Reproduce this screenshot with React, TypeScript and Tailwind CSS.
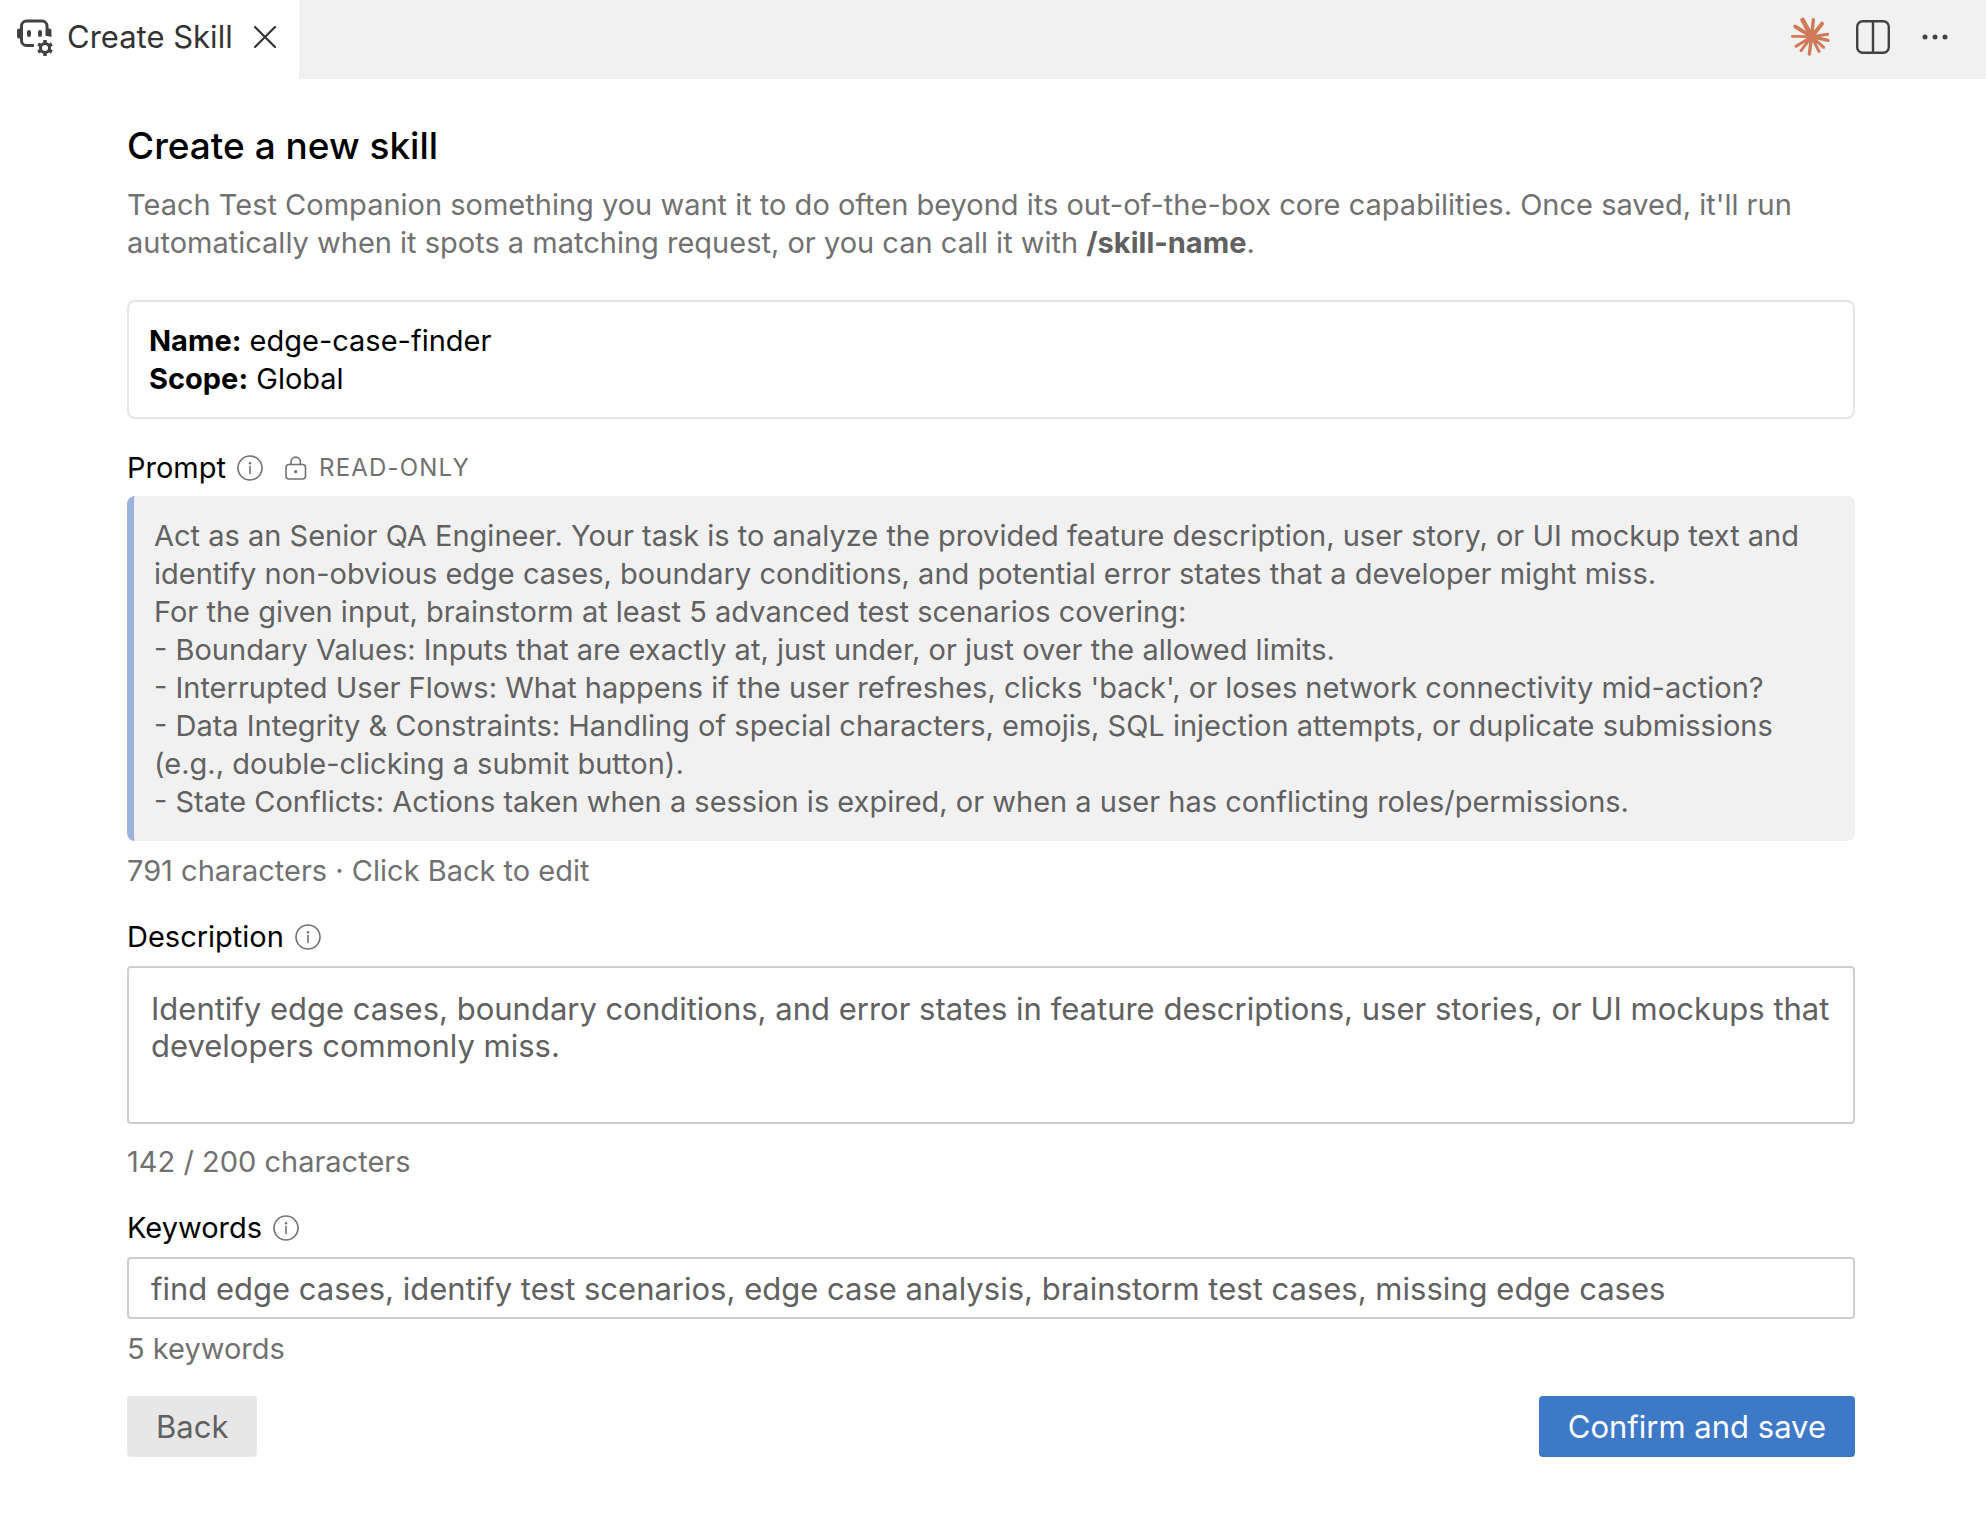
import { useState } from "react";
import type { ReactNode } from "react";

const PROMPT = `Act as an Senior QA Engineer. Your task is to analyze the provided feature description, user story, or UI mockup text and identify non-obvious edge cases, boundary conditions, and potential error states that a developer might miss.
For the given input, brainstorm at least 5 advanced test scenarios covering:
- Boundary Values: Inputs that are exactly at, just under, or just over the allowed limits.
- Interrupted User Flows: What happens if the user refreshes, clicks 'back', or loses network connectivity mid-action?
- Data Integrity & Constraints: Handling of special characters, emojis, SQL injection attempts, or duplicate submissions (e.g., double-clicking a submit button).
- State Conflicts: Actions taken when a session is expired, or when a user has conflicting roles/permissions.`;

function AgentIcon() {
  return (
    <svg width="38" height="38" viewBox="0 0 38 38" fill="none" className="shrink-0">
      <path
        d="M18 27.500H10.500a5 5 0 0 1-5-5V8a5 5 0 0 1 5-5h15.500a5 5 0 0 1 5 5v10"
        stroke="#424242"
        strokeWidth="3"
      />
      <path d="M5.500 10.500H3a2 2 0 0 0-2 2v6a2 2 0 0 0 2 2h2.500zM31 10.500h2.500a2 2 0 0 1 2 2v6.500l-4.500-1z" fill="#424242" />
      <path d="M13 14v3M24 14v3" stroke="#424242" strokeWidth="4" strokeLinecap="round" />
      <circle cx="29" cy="30" r="4.500" stroke="#424242" strokeWidth="3" />
      <path
        d="M29 22v3.500M29 34.500V38M22.100 26l3 1.750M32.900 32.250l3 1.750M22.100 34l3-1.750M32.900 27.750l3-1.750"
        stroke="#424242"
        strokeWidth="3.500"
      />
    </svg>
  );
}

function BurstIcon() {
  return (
    <svg width="40" height="40" viewBox="30 28 120 120" fill="none" stroke="#cf7a58" strokeLinecap="round">
      <path d="M95 87L68 37" strokeWidth="14" />
      <path d="M95 87L126 48M95 87L46 57" strokeWidth="12" />
      <path d="M95 87L100 36M95 87L144 98M95 87L88 139" strokeWidth="10" />
      <path d="M95 87L143 80M95 87L131 119M95 87L117 131M95 87L48 116M95 87L63 129" strokeWidth="9" />
      <path d="M95 87L37 86" strokeWidth="8" />
      <circle cx="95" cy="87" r="13" fill="#cf7a58" />
    </svg>
  );
}

function InfoIcon() {
  return (
    <svg width="26" height="26" viewBox="0 0 26 26" fill="none" className="shrink-0">
      <circle cx="13" cy="13" r="12" stroke="#717171" strokeWidth="1.600" />
      <path d="M13 11.500v7" stroke="#717171" strokeWidth="1.600" strokeLinecap="round" />
      <circle cx="13" cy="8.300" r="1.200" fill="#717171" />
    </svg>
  );
}

function LockIcon() {
  return (
    <svg width="22" height="24" viewBox="0 0 22 24" fill="none" className="shrink-0">
      <rect x="1" y="8.500" width="19.500" height="14.500" rx="3" stroke="#717171" strokeWidth="1.600" />
      <path d="M6 8.500V5.800a4.700 4.700 0 0 1 9.400 0v2.700" stroke="#717171" strokeWidth="1.600" />
      <circle cx="10.700" cy="15.700" r="1.600" fill="#717171" />
    </svg>
  );
}

function FieldLabel({ htmlFor, children }: { htmlFor: string; children: ReactNode }) {
  return (
    <div className="flex items-center gap-[11px]">
      <label htmlFor={htmlFor} className="text-black">
        {children}
      </label>
      <InfoIcon />
    </div>
  );
}

function TabBar() {
  return (
    <header className="flex h-[79px] items-stretch justify-between bg-[#f1f1f1]">
      <div className="flex items-center bg-white pr-[18px] pb-[5px] pl-4">
        <AgentIcon />
        <span className="ml-[13px] text-[31px] text-[#333333]">Create Skill</span>
        <button type="button" aria-label="Close" className="ml-4 p-1">
          <svg width="24" height="24" viewBox="0 0 24 24" fill="none">
            <path d="M2 2l20 20M22 2L2 22" stroke="#333333" strokeWidth="2.200" strokeLinecap="round" />
          </svg>
        </button>
      </div>
      <div className="flex items-center gap-[26px] pr-[38px] pb-[6px]">
        <button type="button" aria-label="Claude">
          <BurstIcon />
        </button>
        <button type="button" aria-label="Split editor">
          <svg width="34" height="34" viewBox="0 0 34 34" fill="none">
            <rect x="1.200" y="1.200" width="31.600" height="31.600" rx="5.500" stroke="#424242" strokeWidth="2.400" />
            <path d="M17 1v32" stroke="#424242" strokeWidth="2.400" />
          </svg>
        </button>
        <button type="button" aria-label="More actions" className="ml-[6px]">
          <svg width="26" height="6" viewBox="0 0 26 6" fill="#424242">
            <circle cx="3" cy="3" r="2.500" />
            <circle cx="13" cy="3" r="2.500" />
            <circle cx="23" cy="3" r="2.500" />
          </svg>
        </button>
      </div>
    </header>
  );
}

export default function App() {
  const [description, setDescription] = useState(
    "Identify edge cases, boundary conditions, and error states in feature descriptions, user stories, or UI mockups that developers commonly miss."
  );
  const [keywords, setKeywords] = useState(
    "find edge cases, identify test scenarios, edge case analysis, brainstorm test cases, missing edge cases"
  );

  return (
    <div className="min-h-screen bg-white font-['Inter',sans-serif] text-[29px] leading-[38px] text-[#717171]">
      <TabBar />

      <main className="pt-[43px] pr-[131px] pb-[60px] pl-[127px]">
        <h1 className="text-[37px] leading-[48px] font-medium text-black">Create a new skill</h1>
        <p className="mt-4">
          Teach Test Companion something you want it to do often beyond its out-of-the-box core
          capabilities. Once saved, it'll run automatically when it spots a matching request, or you
          can call it with <strong className="font-bold text-[#616161]">/skill-name</strong>.
        </p>

        <div className="mt-[38px] rounded-lg border-2 border-[#e5e5e5] px-5 pt-5 pb-[19px] text-black">
          <div>
            <strong>Name:</strong> edge-case-finder
          </div>
          <div>
            <strong>Scope:</strong> Global
          </div>
        </div>

        {/* Prompt */}
        <section className="mt-[30px]">
          <div className="flex items-center gap-[22px]">
            <FieldLabel htmlFor="prompt">Prompt</FieldLabel>
            <span className="flex items-center gap-3 text-[24px] tracking-wider">
              <LockIcon />
              READ-ONLY
            </span>
          </div>
          <output
            id="prompt"
            className="mt-[9px] block rounded-lg border-l-[7px] border-[#9ab3dc] bg-[#f1f1f1] pt-[21px] pr-5 pb-5 pl-5 whitespace-pre-wrap text-[#616161]"
          >
            {PROMPT}
          </output>
          <p className="mt-[11px]">791 characters · Click Back to edit</p>
        </section>

        {/* Description */}
        <section className="mt-7">
          <FieldLabel htmlFor="description">Description</FieldLabel>
          <textarea
            id="description"
            value={description}
            maxLength={200}
            onChange={(e) => setDescription(e.target.value)}
            className="mt-[10px] block h-[158px] w-full resize-none rounded border-2 border-[#cecece] py-[22px] pr-4 pl-[22px] text-[31px] leading-[37px] text-[#616161]"
          />
          <p className="mt-[19px]">{description.length} / 200 characters</p>
        </section>

        {/* Keywords */}
        <section className="mt-7">
          <FieldLabel htmlFor="keywords">Keywords</FieldLabel>
          <input
            id="keywords"
            type="text"
            value={keywords}
            onChange={(e) => setKeywords(e.target.value)}
            className="mt-[10px] block h-[62px] w-full rounded border-2 border-[#cecece] px-[22px] text-[31px] text-[#616161]"
          />
          <p className="mt-[11px]">{keywords.split(",").length} keywords</p>
        </section>

        <div className="mt-7 flex items-center justify-between text-[31px]">
          <button type="button" className="h-[61px] rounded bg-[#e7e7e7] px-[29px] text-[#616161]">
            Back
          </button>
          <button type="button" className="h-[61px] rounded bg-[#3e79c7] px-[29px] text-white">
            Confirm and save
          </button>
        </div>
      </main>
    </div>
  );
}
